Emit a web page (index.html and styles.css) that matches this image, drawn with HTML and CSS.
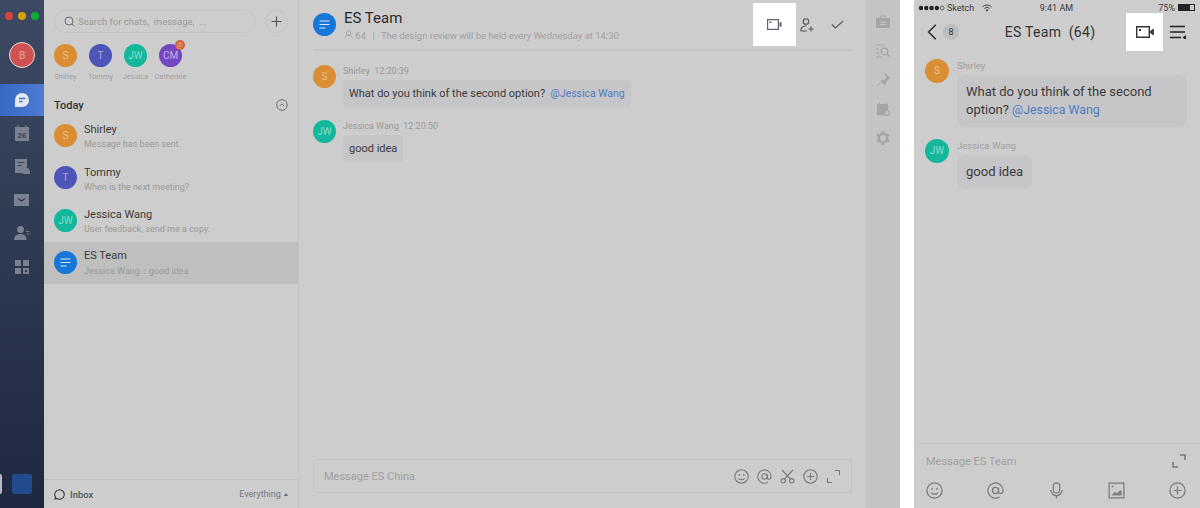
FILE: index.html
```html
<!DOCTYPE html>
<html lang="en">
<head>
  <meta charset="UTF-8" />
  <title>ES Team</title>
  <link rel="stylesheet" href="styles.css">
</head>
<body>
  <div class="desktop">
    <nav class="rail">
      <div class="lights"><span class="red"></span><span class="yellow"></span><span class="green"></span></div>
      <div class="me">B</div>
      <a class="rail-item active" href="#">
        <svg width="16" height="16" viewBox="0 0 16 16"><path d="M8 1a7 7 0 1 1 0 14H1V8a7 7 0 0 1 7-7z" fill="#e4e8f2"/><path d="M5 6.4h6.4M5 9.4h3.6" stroke="#4a76cf" stroke-width="1.5"/></svg>
      </a>
      <a class="rail-item" href="#">
        <svg width="16" height="16" viewBox="0 0 16 16"><path d="M1 2h14v14H1z" fill="#7b8190"/><path d="M4 .5v3M12 .5v3" stroke="#7b8190" stroke-width="1.4"/><text x="8" y="12.6" class="cal-num">26</text></svg>
      </a>
      <a class="rail-item" href="#">
        <svg width="16" height="16" viewBox="0 0 16 16"><path d="M1 1h12v8.5a4 4 0 0 0-3 5.5H1z" fill="#7b8190"/><path d="M3.5 4.5h7M3.5 7.5h4" stroke="#36415a" stroke-width="1.2"/><path d="M9.500 16a2.500 2.500 0 0 1 .5-4.800 3 3 0 0 1 5.500 1.200 1.900 1.900 0 0 1 0 3.600z" fill="#7b8190"/></svg>
      </a>
      <a class="rail-item" href="#">
        <svg width="16" height="14" viewBox="0 0 16 14"><path d="M0 1h15v12H0z" fill="#7b8190"/><path d="M4 5.500l3.500 2.500 3.500-2.500" fill="none" stroke="#2f3a52" stroke-width="1.200"/></svg>
      </a>
      <a class="rail-item" href="#">
        <svg width="16" height="16" viewBox="0 0 16 16"><circle cx="6.500" cy="4.500" r="3.500" fill="#7b8190"/><path d="M0 15c0-4 2.500-6 6.500-6s6 2 6 6z" fill="#7b8190"/><path d="M12 6.500h3.500M13 9h2.500" stroke="#7b8190" stroke-width="1.100"/></svg>
      </a>
      <a class="rail-item" href="#">
        <svg width="16" height="16" viewBox="0 0 16 16"><path d="M1 1h6v6H1zM9 1h6v6H9zM1 9h6v6H1z" fill="#7b8190"/><path d="M10 10h4v4h-4z" fill="none" stroke="#7b8190" stroke-width="2"/></svg>
      </a>
      <div class="rail-foot"><span class="tab"></span><span class="workspace"></span></div>
    </nav>

    <aside class="list">
      <div class="search-row">
        <div class="search">
          <svg width="11" height="11" viewBox="0 0 11 11"><circle cx="5" cy="5" r="4" fill="none" stroke="#6d6d6d" stroke-width="1"/><path d="M8 8l2.200 2.200" stroke="#6d6d6d"/></svg>
          <span>Search for chats,&nbsp; message,&nbsp; ...</span>
        </div>
        <div class="add"><svg width="11" height="11" viewBox="0 0 11 11"><path d="M5.500 .5v10M.5 5.500h10" stroke="#555" stroke-width="1.200"/></svg></div>
      </div>

      <div class="recent">
        <div class="person"><div class="avatar orange">S</div><span>Shirley</span></div>
        <div class="person"><div class="avatar indigo">T</div><span>Tommy</span></div>
        <div class="person"><div class="avatar teal">JW</div><span>Jessica</span></div>
        <div class="person"><div class="avatar purple">CM<i class="at">@</i></div><span>Catherine</span></div>
      </div>

      <div class="today">
        <strong>Today</strong>
        <svg width="12" height="12" viewBox="0 0 12 12"><circle cx="6" cy="6" r="5.300" fill="none" stroke="#707070"/><path d="M3.800 6.900L6 4.900l2.200 2" fill="none" stroke="#707070"/></svg>
      </div>

      <div class="chat">
        <div class="avatar orange">S</div>
        <div class="chat-text"><b>Shirley</b><small>Message has been sent.</small></div>
      </div>
      <div class="chat">
        <div class="avatar indigo">T</div>
        <div class="chat-text"><b>Tommy</b><small>When is the next meeting?</small></div>
      </div>
      <div class="chat">
        <div class="avatar teal">JW</div>
        <div class="chat-text"><b>Jessica Wang</b><small>User feedback, send me a copy.</small></div>
      </div>
      <div class="chat selected">
        <div class="avatar blue">
          <svg width="11" height="9" viewBox="0 0 11 9"><path d="M.5 1h10M.5 4.500h10M.5 8h6" stroke="#dce9f8" stroke-width="1.200"/></svg>
        </div>
        <div class="chat-text"><b>ES Team</b><small>Jessica Wang：good idea</small></div>
      </div>

      <div class="list-foot">
        <svg width="11" height="11" viewBox="0 0 11 11"><path d="M5.500 .8a4.700 4.700 0 1 1-2.600 8.600L1 10l.5-2A4.700 4.700 0 0 1 5.500 .8z" fill="none" stroke="#3a3a3a" stroke-width="1.100"/></svg>
        <span class="inbox">Inbox</span>
        <span class="filter">Everything <i class="caret"></i></span>
      </div>
    </aside>

    <main class="conv">
      <header class="conv-head">
        <div class="avatar blue">
          <svg width="11" height="9" viewBox="0 0 11 9"><path d="M.5 1h10M.5 4.500h10M.5 8h6" stroke="#dce9f8" stroke-width="1.200"/></svg>
        </div>
        <div class="conv-title">
          <h1>ES Team</h1>
          <p>
            <svg width="9" height="9" viewBox="0 0 9 9"><circle cx="4.500" cy="3" r="2.200" fill="none" stroke="#9a9a9a" stroke-width=".8"/><path d="M.7 8.500c.3-2.200 1.800-3.200 3.800-3.200s3.500 1 3.800 3.200" fill="none" stroke="#9a9a9a" stroke-width=".8"/></svg>
            64 <span class="sep">|</span> The design review will be held every Wednesday at 14:30
          </p>
        </div>
        <div class="conv-tools">
          <div class="spot">
            <svg width="15" height="11" viewBox="0 0 15 11"><path d="M.6 .6h10.800v9.800H.6z" fill="none" stroke="#5d6470" stroke-width="1.200"/><path d="M2.500 2.500h2v1.500h-2z" fill="#5d6470"/><path d="M12.500 4l2-1.500v6l-2-1.500z" fill="#5d6470"/></svg>
          </div>
          <svg class="user-add" width="14" height="14" viewBox="0 0 14 14"><circle cx="6" cy="3.500" r="2.800" fill="none" stroke="#555" stroke-width="1.100"/><path d="M.8 13c0-3 1.500-4.500 4-5l1.500-.2M.8 13h6" fill="none" stroke="#555" stroke-width="1.100"/><path d="M11 8.500v5M8.500 11h5" stroke="#555" stroke-width="1.100"/></svg>
          <svg class="check" width="13" height="9" viewBox="0 0 13 9"><path d="M.8 4.500l3.700 3.500L12.200 .8" fill="none" stroke="#555" stroke-width="1.100"/></svg>
        </div>
      </header>

      <div class="msg">
        <div class="avatar orange">S</div>
        <div>
          <div class="msg-meta">Shirley &nbsp;12:20:39</div>
          <div class="bubble">What do you think of the second option? &nbsp;<a href="#">@Jessica Wang</a></div>
        </div>
      </div>
      <div class="msg">
        <div class="avatar teal">JW</div>
        <div>
          <div class="msg-meta">Jessica Wang &nbsp;12:20:50</div>
          <div class="bubble">good idea</div>
        </div>
      </div>

      <div class="composer">
        <span>Message ES China</span>
        <div class="composer-tools">
          <svg width="15" height="15" viewBox="0 0 15 15"><circle cx="7.500" cy="7.500" r="6.700" class="ln"/><circle cx="5.300" cy="6" r=".9" fill="#808080"/><circle cx="9.700" cy="6" r=".9" fill="#808080"/><path d="M4.500 9.300c1.500 2 4.500 2 6 0" class="ln"/></svg>
          <svg width="15" height="15" viewBox="0 0 15 15"><circle cx="7.500" cy="7.500" r="2.700" class="ln"/><path d="M10.200 5v3.800c0 2.200 3.800 2 4-1.300A6.700 6.700 0 1 0 11 13.300" class="ln"/></svg>
          <svg width="15" height="15" viewBox="0 0 15 15"><circle cx="3.200" cy="11.800" r="2.200" class="ln"/><circle cx="11.800" cy="11.800" r="2.200" class="ln"/><path d="M4.500 10L13 1M10.500 10L2 1" class="ln"/></svg>
          <svg width="15" height="15" viewBox="0 0 15 15"><circle cx="7.500" cy="7.500" r="6.700" class="ln"/><path d="M7.500 4v7M4 7.500h7" class="ln"/></svg>
          <svg width="15" height="15" viewBox="0 0 15 15"><path d="M9 1.500h4.500V6M1.500 9v4.500H6" class="ln"/></svg>
        </div>
      </div>
    </main>

    <aside class="side">
      <svg width="14" height="14" viewBox="0 0 14 14"><path d="M0 3h14v10H0z" fill="#a6a6a6"/><path d="M5 3V1h4v2" fill="none" stroke="#a6a6a6" stroke-width="1.200"/><path d="M4 7h6M4 9.500h6" stroke="#c4c4c4"/></svg>
      <svg width="14" height="14" viewBox="0 0 14 14"><path d="M0 1h9M0 5h3M0 9h3M0 13h6" stroke="#a6a6a6" stroke-width="1.200"/><circle cx="8.500" cy="7.500" r="3.300" fill="none" stroke="#a6a6a6" stroke-width="1.300"/><path d="M11 10l2.500 2.500" stroke="#a6a6a6" stroke-width="1.300"/></svg>
      <svg width="14" height="14" viewBox="0 0 14 14"><path d="M8.500 0L14 5.500l-1.500.5-3 3-.3 3L5 7.800l3-.3 3-3zM5.500 8.500L1 13" fill="#a6a6a6" stroke="#a6a6a6"/></svg>
      <svg width="14" height="14" viewBox="0 0 14 14"><path d="M1 2h11v6.500a4 4 0 0 0-3.500 5H1z" fill="#a6a6a6"/><path d="M3.500 .5v3M9.500 .5v3" stroke="#a6a6a6" stroke-width="1.200"/><circle cx="11" cy="11" r="2.500" fill="none" stroke="#a6a6a6" stroke-width="1.300"/></svg>
      <svg width="14" height="14" viewBox="0 0 14 14"><circle cx="7" cy="7" r="4.300" fill="none" stroke="#a6a6a6" stroke-width="2.600"/><path d="M7 0v3M7 11v3M1 3.500l2.500 1.500M10.500 9l2.500 1.500M1 10.500L3.500 9M10.500 5L13 3.500" stroke="#a6a6a6" stroke-width="2.400"/></svg>
    </aside>
  </div>

  <div class="phone">
    <div class="status">
      <span class="carrier">
        <svg class="dots" width="27" height="6" viewBox="0 0 27 6"><circle cx="3" cy="3" r="2.200" fill="#222"/><circle cx="8.300" cy="3" r="2.200" fill="#222"/><circle cx="13.600" cy="3" r="2.200" fill="#222"/><circle cx="18.900" cy="3" r="2.200" fill="#222"/><circle cx="24.200" cy="3" r="1.900" fill="none" stroke="#222" stroke-width=".6"/></svg>
        Sketch
        <svg class="wifi" width="10" height="8" viewBox="0 0 10 8"><path d="M.5 2.800a6.500 6.500 0 0 1 9 0M2.200 4.500a4 4 0 0 1 5.600 0" fill="none" stroke="#333" stroke-width=".9"/><path d="M5 7.500L3.700 6a1.800 1.800 0 0 1 2.600 0z" fill="#333"/></svg>
      </span>
      <span class="clock">9:41 AM</span>
      <span class="battery">75% <i class="batt"><i></i></i></span>
    </div>
    <div class="phone-nav">
      <svg width="10" height="16" viewBox="0 0 10 16"><path d="M8.800 .8L1.500 8l7.300 7.200" fill="none" stroke="#2b2b2b" stroke-width="1.500"/></svg>
      <span class="count">8</span>
      <h2>ES Team &nbsp;(64)</h2>
      <div class="spot small">
        <svg width="18" height="12" viewBox="0 0 18 12"><path d="M.7 .7h12.600v10.600H.7z" fill="none" stroke="#2f333c" stroke-width="1.400"/><path d="M3 3h2v2H3z" fill="#2f333c"/><path d="M14.500 5l3-2v6l-3-2z" fill="#2f333c" stroke="#2f333c" stroke-width=".6"/></svg>
      </div>
      <svg class="menu" width="16" height="14" viewBox="0 0 16 14"><path d="M0 1.500h15M0 7h15M0 12.500h11" stroke="#222" stroke-width="1.300"/><path d="M16 10v5l-3.500-2.500z" fill="#222"/></svg>
    </div>

    <div class="p-msg">
      <div class="avatar orange">S</div>
      <div>
        <div class="p-name">Shirley</div>
        <div class="p-bubble wide">What do you think of the second option? <a href="#">@Jessica Wang</a></div>
      </div>
    </div>
    <div class="p-msg">
      <div class="avatar teal">JW</div>
      <div>
        <div class="p-name">Jessica Wang</div>
        <div class="p-bubble">good idea</div>
      </div>
    </div>

    <div class="p-input">
      <div class="p-line">
        <span>Message ES Team</span>
        <svg width="14" height="14" viewBox="0 0 14 14"><path d="M8 1h5v5M1 8v5h5" fill="none" stroke="#555" stroke-width="1.100"/></svg>
      </div>
      <div class="p-tools">
        <svg width="17" height="17" viewBox="0 0 15 15"><circle cx="7.500" cy="7.500" r="6.700" class="ln"/><circle cx="5.300" cy="6" r=".9" fill="#808080"/><circle cx="9.700" cy="6" r=".9" fill="#808080"/><path d="M4.500 9.300c1.500 2 4.500 2 6 0" class="ln"/></svg>
        <svg width="17" height="17" viewBox="0 0 15 15"><circle cx="7.500" cy="7.500" r="2.700" class="ln"/><path d="M10.200 5v3.800c0 2.200 3.800 2 4-1.300A6.700 6.700 0 1 0 11 13.300" class="ln"/></svg>
        <svg width="17" height="17" viewBox="0 0 15 15"><rect x="4.700" y=".7" width="5.600" height="9" rx="2.800" class="ln"/><path d="M2.500 7a5 5 0 0 0 10 0M7.500 12v2.500" class="ln"/></svg>
        <svg width="17" height="17" viewBox="0 0 15 15"><path d="M1 1h13v13H1z" class="ln"/><circle cx="4" cy="4" r=".9" fill="#808080"/><path d="M3 12l3-3.500 2 1.500 3-3 1 1v4z" fill="#808080"/></svg>
        <svg width="17" height="17" viewBox="0 0 15 15"><circle cx="7.500" cy="7.500" r="6.700" class="ln"/><path d="M7.500 4v7M4 7.500h7" class="ln"/></svg>
      </div>
    </div>
  </div>
</body>
</html>
```

FILE: styles.css
```css
* { box-sizing: border-box; }
html, body { height: 100%; }
body {
  margin: 0;
  display: flex;
  height: 508px;
  overflow: hidden;
  background: #fff;
  font-family: "Roboto", "Liberation Sans", sans-serif;
  color: #3a3a3a;
}
a { text-decoration: none; color: #4f7bc4; }
.ln { fill: none; stroke: #7a7a7a; stroke-width: 1.100; }

.avatar {
  flex: none;
  width: 23px;
  height: 23px;
  border-radius: 50%;
  display: flex;
  align-items: center;
  justify-content: center;
  font-size: 10px;
  color: #e8c08c;
  position: relative;
}
.orange { background: #d98e34; }
.indigo { background: #4e55b9; color: #a9acdf; }
.teal { background: #12b79c; color: #8adccb; }
.purple { background: #7447c1; color: #c4aee6; }
.blue { background: #1677d9; }

.desktop { display: flex; width: 900px; height: 100%; background: #cdcdcd; }

.rail {
  width: 44px;
  flex: none;
  display: flex;
  flex-direction: column;
  background: linear-gradient(#3e4a63, #1e2940);
}
.lights { display: flex; gap: 5px; padding: 12px 0 0 5px; }
.lights span { width: 8px; height: 8px; border-radius: 50%; }
.red { background: #d8453f; }
.yellow { background: #d8a20e; }
.green { background: #11a83b; }
.me {
  width: 26px;
  height: 26px;
  margin: 22px 0 16px 9px;
  border-radius: 50%;
  border: 1px solid #e0e0e0;
  background: #cf5151;
  color: #e8a8a8;
  font-size: 10px;
  display: flex;
  align-items: center;
  justify-content: center;
}
.rail-item { height: 33.500px; display: flex; align-items: center; justify-content: center; }
.rail-item.active { height: 32px; background: linear-gradient(90deg, #3668c6, #4f7bd0); }
.cal-num { font: bold 8px "Liberation Sans", sans-serif; fill: #36415a; text-anchor: middle; }
.rail-foot { margin-top: auto; padding-bottom: 14px; display: flex; justify-content: space-between; }
.tab { width: 2px; height: 20px; background: #b9bcc4; border-radius: 0 2px 2px 0; }
.workspace { width: 20px; height: 20px; margin-right: 12px; background: #234a8e; border-radius: 2px; }

.list {
  width: 255px;
  flex: none;
  display: flex;
  flex-direction: column;
  border-right: 1px solid #c4c4c4;
}
.search-row { display: flex; align-items: center; padding: 10px 10px 0 10px; gap: 9px; }
.search {
  width: 202px;
  height: 23px;
  border: 1px solid #c5c5c5;
  border-radius: 12px;
  display: flex;
  align-items: center;
  gap: 3px;
  padding-left: 9px;
  font-size: 9.500px;
  color: #999;
}
.add {
  width: 23px;
  height: 23px;
  border: 1px solid #c2c2c2;
  border-radius: 50%;
  display: flex;
  align-items: center;
  justify-content: center;
}
.recent { display: flex; padding: 11px 0 0 4px; }
.person { width: 35px; display: flex; flex-direction: column; align-items: center; }
.person span { font-size: 7.500px; color: #a0a0a0; margin-top: 5px; white-space: nowrap; }
.at {
  position: absolute;
  top: -4px;
  right: -3px;
  width: 10px;
  height: 10px;
  border-radius: 50%;
  background: #d2603a;
  color: #eab7a0;
  font-size: 7px;
  font-style: normal;
  line-height: 10px;
  text-align: center;
}
.today {
  display: flex;
  justify-content: space-between;
  align-items: center;
  padding: 15px 10px 0 10px;
  height: 33px;
  font-size: 11px;
}
.today strong { font-weight: 500; color: #333; }
.chat { height: 42.500px; display: flex; align-items: center; gap: 7px; padding-left: 10px; }
.chat.selected { background: #bfbfbf; }
.chat-text { display: flex; flex-direction: column; gap: 3px; padding-top: 2px; }
.chat-text b { font-weight: 400; font-size: 11px; color: #3a3a3a; }
.chat-text small { font-size: 9px; color: #9a9a9a; }
.list-foot {
  margin-top: auto;
  height: 29px;
  border-top: 1px solid #c3c3c3;
  display: flex;
  align-items: center;
  padding: 0 10px;
  gap: 5px;
  font-size: 9px;
}
.inbox { font-weight: 500; color: #555; font-size: 9.500px; }
.filter { margin-left: auto; color: #777; }
.caret {
  display: inline-block;
  vertical-align: 1px;
  margin-left: 1px;
  border: 2.500px solid transparent;
  border-top: 0;
  border-bottom: 3px solid #666;
}

.conv { flex: 1; display: flex; flex-direction: column; padding: 0 14px; }
.conv-head {
  height: 51px;
  flex: none;
  border-bottom: 2px solid #c4c4c4;
  display: flex;
  align-items: center;
  gap: 8px;
  margin-bottom: 14px;
}
.conv-title h1 { margin: 0; font-size: 15px; font-weight: 400; color: #2b2b2b; }
.conv-title p { margin: 3px 0 0; font-size: 9.500px; color: #a0a0a0; }
.sep { margin: 0 4px; }
.conv-tools { margin-left: auto; display: flex; align-items: center; }
.spot {
  width: 43px;
  height: 43px;
  background: #fff;
  display: flex;
  align-items: center;
  justify-content: center;
}
.user-add { margin-left: 4px; }
.check { margin: 0 8px 0 17px; }
.msg { display: flex; gap: 7px; margin-bottom: 13px; }
.msg-meta { font-size: 9px; color: #9a9a9a; margin-top: 1px; height: 14px; }
.bubble {
  width: fit-content;
  height: 27px;
  line-height: 27px;
  padding: 0 6px;
  background: #c6c6c8;
  border-radius: 4px;
  font-size: 11px;
  color: #3a3a3a;
  white-space: nowrap;
}
.bubble a, .p-bubble a { font-size: .95em; }
.composer {
  margin-top: auto;
  margin-bottom: 15px;
  height: 34px;
  border: 1px solid #c4c4c4;
  border-radius: 3px;
  display: flex;
  align-items: center;
  padding: 0 10px;
  font-size: 11px;
  color: #a0a0a0;
}
.composer-tools { margin-left: auto; display: flex; gap: 8px; }
.side {
  width: 34px;
  flex: none;
  background: #c4c4c4;
  display: flex;
  flex-direction: column;
  align-items: center;
  gap: 15px;
  padding-top: 15px;
}

.phone {
  width: 286px;
  margin-left: 14px;
  flex: none;
  height: 100%;
  background: #cdcdcd;
  display: flex;
  flex-direction: column;
}
.status {
  height: 13px;
  display: flex;
  align-items: center;
  justify-content: space-between;
  padding: 2px 5px 0 4px;
  font-size: 9px;
  color: #3a3a3a;
}
.carrier { display: flex; align-items: center; gap: 2px; width: 100px; }
.wifi { margin-left: 6px; }
.battery { width: 100px; text-align: right; display: flex; justify-content: flex-end; align-items: center; gap: 3px; }
.batt { display: inline-block; width: 17px; height: 7px; border: 1px solid #222; }
.batt i { display: block; width: 75%; height: 100%; background: #222; }
.phone-nav { height: 38px; display: flex; align-items: center; padding-left: 13px; }
.count {
  width: 16px;
  height: 16px;
  margin-left: 6px;
  border-radius: 50%;
  background: #bdbdbd;
  font-size: 9px;
  line-height: 16px;
  text-align: center;
}
.phone-nav h2 {
  margin: 0 21px 0 36px;
  width: 110px;
  text-align: center;
  font-size: 14px;
  font-weight: 400;
  letter-spacing: .3px;
  color: #333;
  white-space: nowrap;
}
.spot.small { width: 37px; height: 38px; }
.menu { margin-left: 7px; }
.p-msg { display: flex; gap: 8px; padding-left: 11px; margin-bottom: 4px; }
.p-msg .avatar { width: 24px; height: 24px; margin-top: 7.500px; }
.p-name { font-size: 9.500px; color: #a0a0a0; height: 24px; line-height: 30px; }
.p-bubble {
  width: fit-content;
  padding: 8px 9px;
  background: #c6c6c8;
  border-radius: 8px;
  font-size: 13px;
  line-height: 18px;
  color: #3a3a3a;
}
.p-bubble.wide { width: 230px; }
.p-input { margin-top: auto; height: 65px; border-top: 1px solid #c4c4c4; padding: 0 14px 0 12px; }
.p-line { height: 34px; display: flex; align-items: center; justify-content: space-between; font-size: 11px; color: #a0a0a0; }
.p-tools { display: flex; justify-content: space-between; padding-top: 4px; }
```
